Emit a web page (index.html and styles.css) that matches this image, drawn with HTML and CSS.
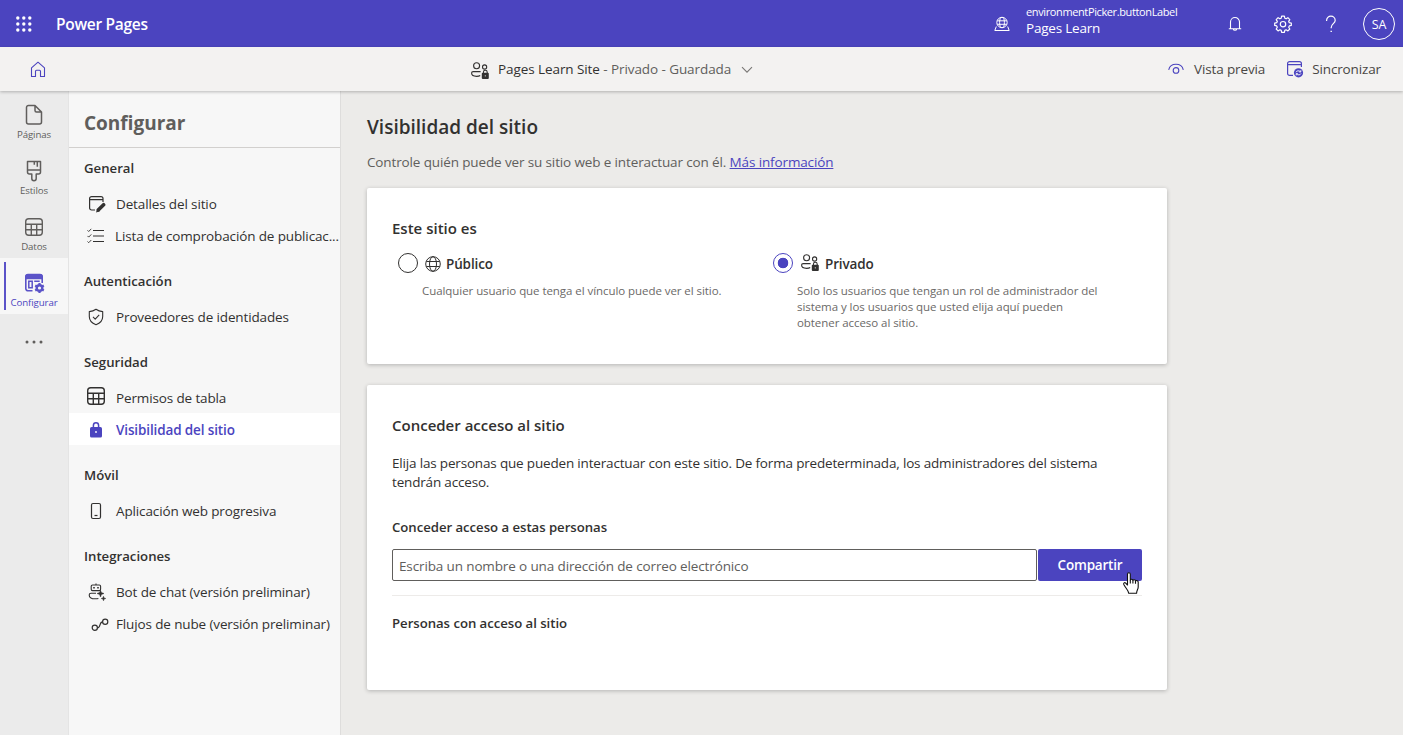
FILE: index.html
```
<!DOCTYPE html>
<html lang="es">
<head>
<meta charset="utf-8">
<title>Power Pages</title>
<link rel="stylesheet" href="styles.css">
</head>
<body>
<svg class="sprite" width="0" height="0" aria-hidden="true">
  <symbol id="people-lock" viewBox="0 0 20 20">
    <g fill="none" stroke="currentColor" stroke-width="1.1">
      <circle cx="6.600" cy="4.800" r="3"/>
      <circle cx="14.600" cy="6" r="2.100"/>
      <path d="M10.600 10.600H3.200c-1 0-1.600.7-1.600 1.500 0 2 2 3.300 5 3.300 1.500 0 2.800-.3 3.600-.9"/>
      <path d="M13.400 12.500v-1.300a1.900 1.900 0 0 1 3.800 0v1.300"/>
    </g>
    <rect x="11.800" y="11.800" width="7" height="6.200" rx="1" fill="currentColor"/>
    <circle cx="15.300" cy="14.800" r=".6" fill="#f3f2f1"/>
  </symbol>
  <symbol id="table" viewBox="0 0 20 20">
    <g fill="none" stroke="currentColor" stroke-width="1.400">
      <rect x="1.700" y="1.700" width="16.600" height="16.600" rx="3"/>
      <path d="M1.700 7.300h16.600M1.700 12.700h16.600M7.300 7.300v11M12.700 7.300v11"/>
    </g>
  </symbol>
</svg>

<header class="topbar">
  <svg class="waffle" width="16" height="16" viewBox="0 0 16 16" fill="#fff">
    <circle cx="1.800" cy="2" r="1.700"/><circle cx="7.800" cy="2" r="1.700"/><circle cx="13.800" cy="2" r="1.700"/>
    <circle cx="1.800" cy="8" r="1.700"/><circle cx="7.800" cy="8" r="1.700"/><circle cx="13.800" cy="8" r="1.700"/>
    <circle cx="1.800" cy="14" r="1.700"/><circle cx="7.800" cy="14" r="1.700"/><circle cx="13.800" cy="14" r="1.700"/>
  </svg>
  <span class="brand">Power Pages</span>
  <div class="environment">
    <svg width="16" height="16" viewBox="0 0 16 16" fill="none" stroke="#fff" stroke-width="1">
      <circle cx="8" cy="6.500" r="5.200"/><ellipse cx="8" cy="6.500" rx="2.400" ry="5.200"/>
      <path d="M3.200 4.800h9.600M3.200 8.300h9.600M2.300 10.500 .8 14.500h14.400l-1.500-4"/>
    </svg>
    <div class="environment-text">
      <span class="environment-label">environmentPicker.buttonLabel</span>
      <span class="environment-name">Pages Learn</span>
    </div>
  </div>
  <svg class="top-icon bell" width="16" height="16" viewBox="0 0 16 16" fill="none" stroke="#fff" stroke-width="1.100">
    <path d="M3.500 12.500V6a4.500 4.500 0 0 1 9 0v6.500M1.800 12.700h12.400M6.200 12.900a1.850 1.850 0 0 0 3.600 0"/>
  </svg>
  <svg class="top-icon gear" width="18" height="18" viewBox="0 0 18 18" fill="none" stroke="#fff" stroke-width="1.200" stroke-linejoin="round">
    <path d="M7.600 1.200h2.800l.4 2 1.300.6 1.800-1.100 1.900 1.900-1.100 1.800.6 1.300 2 .4v2.300l-2 .5-.6 1.300 1.100 1.800-1.900 1.900-1.800-1.100-1.300.6-.4 1.900H7.600l-.4-1.900-1.300-.6-1.800 1.100-1.900-1.900 1.100-1.800-.6-1.300-2-.5V8.100l2-.4.6-1.300-1.100-1.800 1.900-1.900 1.800 1.100 1.300-.6z"/>
    <circle cx="9" cy="9.200" r="2.700"/>
  </svg>
  <svg class="top-icon help" width="12" height="18" viewBox="0 0 12 18" fill="none" stroke="#fff" stroke-width="1.200">
    <path d="M1.600 6V5.400a4.300 4.300 0 0 1 8.600 0c0 3-4 3.600-4 7v.8"/><path d="M5.500 16.300h1.400"/>
  </svg>
  <span class="avatar">SA</span>
</header>

<div class="sitebar">
  <svg class="home" width="16" height="17" viewBox="0 0 16 17" fill="none" stroke="#4b44bf" stroke-width="1.100" stroke-linejoin="round">
    <path d="M1.500 6.800 8 1.200l6.500 5.600v8.700h-4V10.200a1 1 0 0 0-1-1h-3a1 1 0 0 0-1 1v5.300h-4z"/>
  </svg>
  <div class="site-title">
    <svg class="site-icon" width="20" height="20"><use href="#people-lock"/></svg>
    <span class="site-name">Pages Learn Site <span class="site-state">- Privado - Guardada</span></span>
    <svg class="chevron" width="12" height="8" viewBox="0 0 12 8" fill="none" stroke="#797775" stroke-width="1.100"><path d="m1 1.200 5 5 5-5"/></svg>
  </div>
  <div class="site-actions">
    <svg width="16" height="12" viewBox="0 0 16 12" fill="none" stroke="#4b44bf" stroke-width="1.100">
      <path d="M.7 6.800C1.500 3.500 4.500 1.300 8 1.300s6.500 2.200 7.300 5.500"/><circle cx="8" cy="7.400" r="2.800"/>
    </svg>
    <span class="action preview">Vista previa</span>
    <svg width="18" height="18" viewBox="0 0 18 18" fill="none" stroke="#4b44bf" stroke-width="1.200">
      <path d="M7 15.400H3.600a2 2 0 0 1-2-2V3.600a2 2 0 0 1 2-2h9.800a2 2 0 0 1 2 2V7M1.600 4.600h13.800"/>
      <circle cx="12.500" cy="12.800" r="4.600" fill="#4b44bf" stroke="none"/>
      <path stroke="#fff" stroke-width=".9" d="M10 12.200c.5-1.500 3-2 4.600-.4M14.800 10.200v1.700h-1.700M15 13.500c-.6 1.500-3 2-4.600.4M10.200 15.400v-1.700h1.700"/>
    </svg>
    <span class="action sync">Sincronizar</span>
  </div>
</div>

<div class="workspace">
  <nav class="rail">
    <a class="rail-item">
      <svg width="20" height="22" viewBox="0 0 20 22" fill="none" stroke="#605e5c" stroke-width="1.500" stroke-linejoin="round">
        <path d="M4.500 1.500H11l6.500 6.500v10a2 2 0 0 1-2 2h-11a2 2 0 0 1-2-2V3.500a2 2 0 0 1 2-2zM11 1.500V6.500a1.500 1.500 0 0 0 1.500 1.500h5"/>
      </svg>
      <span>Páginas</span>
    </a>
    <a class="rail-item">
      <svg width="20" height="22" viewBox="0 0 20 22" fill="none" stroke="#605e5c" stroke-width="1.500" stroke-linejoin="round">
        <path d="M3.500 1.500h13v10.500a2 2 0 0 1-2 2h-2.300v4.500a2.200 2.200 0 0 1-4.400 0V14H5.500a2 2 0 0 1-2-2zM3.500 10h13M10.300 1.500v3.300M13.300 1.500v5.200"/>
      </svg>
      <span>Estilos</span>
    </a>
    <a class="rail-item muted">
      <svg width="20" height="22" viewBox="0 -1 20 22"><use href="#table" width="20" height="20"/></svg>
      <span>Datos</span>
    </a>
    <a class="rail-item selected">
      <svg width="22" height="22" viewBox="0 0 22 22" fill="none">
        <path d="M9.500 18.800H5a2.200 2.200 0 0 1-2.200-2.200V4.700A2.200 2.200 0 0 1 5 2.500h12a2.200 2.200 0 0 1 2.200 2.200V11" stroke="#5b53c8" stroke-width="1.600"/>
        <path d="M2.200 7.200V4.500C2.200 3 3.200 2 4.700 2h12.600c1.500 0 2.500 1 2.500 2.500v2.700z" fill="#5b53c8"/>
        <path d="M5.800 9.300h3.400v6.400H5.800zM11.200 9.200h5.500" stroke="#5b53c8" stroke-width="1.500"/>
        <circle cx="16.500" cy="16" r="2.800" stroke="#5b53c8" stroke-width="2.400"/>
        <path d="M16.500 11v2M16.500 19v2M12.200 13.500l1.700 1M19.100 17.500l1.700 1M12.200 18.500l1.700-1M19.100 14.500l1.700-1" stroke="#5b53c8" stroke-width="2.200"/>
      </svg>
      <span>Configurar</span>
    </a>
    <a class="rail-more"><svg width="18" height="4" viewBox="0 0 18 4" fill="#605e5c"><circle cx="2" cy="2" r="1.500"/><circle cx="9" cy="2" r="1.500"/><circle cx="16" cy="2" r="1.500"/></svg></a>
  </nav>

  <aside class="panel">
    <h2 class="panel-title">Configurar</h2>
    <section class="group">
      <h3>General</h3>
      <a class="item">
        <svg width="20" height="20" viewBox="0 0 20 20" fill="none" stroke="#323130" stroke-width="1.200">
          <path d="M9 16H5.600a2 2 0 0 1-2-2V4.600a2 2 0 0 1 2-2h9.400a2 2 0 0 1 2 2v3.400M3.600 5.700H17"/>
          <path d="M17.600 10.700 12.500 15.800" stroke-width="3.600" stroke-linecap="round"/>
          <path d="m11 14.400 2.900 2.900-3.800 1.100z" fill="#323130" stroke="none"/>
        </svg>
        <span>Detalles del sitio</span>
      </a>
      <a class="item shifted">
        <svg width="18" height="16" viewBox="0 0 18 16" fill="none" stroke="#323130" stroke-width="1.100">
          <path d="M6 2.500h11M6 8h11M6 13.500h11"/><path d="m.5 2.300 1.200 1.200L4.300.8M.5 7.900l1.200 1.200 2.600-2.700M.5 13.500l1.200 1.200L4.300 12" stroke-width=".9"/>
        </svg>
        <span>Lista de comprobación de publicac...</span>
      </a>
    </section>
    <section class="group">
      <h3>Autenticación</h3>
      <a class="item">
        <svg width="20" height="20" viewBox="0 0 20 20" fill="none" stroke="#323130" stroke-width="1.100" stroke-linejoin="round">
          <path d="M10 2.300c2 1.500 4.200 2.200 6.700 2.300v5c0 4-2.500 6.700-6.700 8.200-4.200-1.500-6.700-4.200-6.700-8.200v-5c2.500-.1 4.700-.8 6.700-2.300z"/><path d="m7 9.900 2.200 2.200 4-4.200"/>
        </svg>
        <span>Proveedores de identidades</span>
      </a>
    </section>
    <section class="group">
      <h3>Seguridad</h3>
      <a class="item raised"><svg width="20" height="20"><use href="#table"/></svg><span>Permisos de tabla</span></a>
      <a class="item current">
        <svg width="20" height="20" viewBox="0 0 20 20">
          <rect x="4" y="7" width="12" height="10.500" rx="1.600" fill="#4b44bf"/>
          <path d="M7.400 7.500V5.400a2.600 2.600 0 0 1 5.200 0v2.100" fill="none" stroke="#4b44bf" stroke-width="1.500"/>
          <circle cx="10" cy="12" r=".9" fill="#fff"/>
        </svg>
        <span>Visibilidad del sitio</span>
      </a>
    </section>
    <section class="group">
      <h3>Móvil</h3>
      <a class="item">
        <svg width="20" height="20" viewBox="0 0 20 20" fill="none" stroke="#323130" stroke-width="1.200"><rect x="5.500" y="2.500" width="9" height="15" rx="1.500"/><path d="M8.500 14.500h3"/></svg>
        <span>Aplicación web progresiva</span>
      </a>
    </section>
    <section class="group">
      <h3>Integraciones</h3>
      <a class="item">
        <svg width="20" height="20" viewBox="0 0 20 20" fill="none" stroke="#323130" stroke-width="1.100">
          <path d="M10 1.500v1.500"/><rect x="5.200" y="3" width="9.400" height="5.600" rx="1.300"/>
          <path d="M10 11.200H5c-1.100 0-1.800.7-1.800 1.700 0 2.500 2.500 3.900 6 3.900 1.200 0 2.300-.1 3.200-.4"/>
          <path d="M7.200 5.800h1.600M11.200 5.800h1.600" stroke-width="1.500"/>
          <path d="m14.500 8.300.9 2.300 2.600.9-2.600.9-.9 2.600-.9-2.600-2.600-.9 2.600-.9zM17.500 14.300l.6 1.600 1.700.6-1.700.6-.6 1.700-.6-1.700-1.700-.6 1.700-.6z" fill="#323130" stroke-width=".5"/>
        </svg>
        <span>Bot de chat (versión preliminar)</span>
      </a>
      <a class="item flow">
        <svg width="20" height="20" viewBox="0 0 20 20" fill="none" stroke="#323130" stroke-width="1.200"><circle cx="4.800" cy="13.700" r="2.600"/><circle cx="15.200" cy="7.800" r="2.600"/><path d="M7.400 13.800c3.600 0 1.600-6 5.200-6"/></svg>
        <span>Flujos de nube (versión preliminar)</span>
      </a>
    </section>
  </aside>

  <main class="content">
    <h1>Visibilidad del sitio</h1>
    <p class="intro">Controle quién puede ver su sitio web e interactuar con él. <a>Más información</a></p>

    <section class="card visibility">
      <h2>Este sitio es</h2>
      <div class="options">
        <div class="option">
          <div class="option-head">
            <span class="radio"></span>
            <svg class="globe" width="16" height="16" viewBox="0 0 16 16" fill="none" stroke="#323130" stroke-width="1"><circle cx="8" cy="8" r="7.300"/><ellipse cx="8" cy="8" rx="3.500" ry="7.300"/><path d="M1.300 5.500h13.400M1.300 10.500h13.400"/></svg>
            <span class="option-label">Público</span>
          </div>
          <p>Cualquier usuario que tenga el vínculo puede ver el sitio.</p>
        </div>
        <div class="option">
          <div class="option-head">
            <span class="radio checked"></span>
            <svg class="private" width="20" height="20"><use href="#people-lock"/></svg>
            <span class="option-label">Privado</span>
          </div>
          <p>Solo los usuarios que tengan un rol de administrador del<br>sistema y los usuarios que usted elija aquí pueden<br>obtener acceso al sitio.</p>
        </div>
      </div>
    </section>

    <section class="card access">
      <h2>Conceder acceso al sitio</h2>
      <p class="access-text">Elija las personas que pueden interactuar con este sitio. De forma predeterminada, los administradores del sistema<br>tendrán acceso.</p>
      <h3>Conceder acceso a estas personas</h3>
      <div class="share-row">
        <div class="people-input">Escriba un nombre o una dirección de correo electrónico</div>
        <div class="share-button">Compartir
          <svg class="pointer" width="18" height="23" viewBox="0 0 18 23" fill="#fff" stroke="#111" stroke-width="1.100" stroke-linejoin="round">
            <path d="M5.500 13V2.300c0-2 2.800-2 2.800 0V8c.3-1.200 2.500-1 2.600.4.500-1 2.500-.8 2.600.6.600-.8 2.700-.6 2.700 1.100v4.800c0 2.300-1.600 3.600-1.600 6.300H6.700c0-2.600-3.100-5-4.900-8.700-.6-1.500.8-2.500 1.900-1.400z"/><path d="M8.300 8v3.500M10.900 8.400v3.100M13.500 9v2.800" fill="none"/>
          </svg>
        </div>
      </div>
      <h3 class="members">Personas con acceso al sitio</h3>
    </section>
  </main>
</div>
</body>
</html>
```

FILE: styles.css
```
* { box-sizing: border-box; }
body {
  margin: 0;
  height: 735px;
  overflow: hidden;
  display: flex;
  flex-direction: column;
  background: #ecebe9;
  color: #323130;
  font: 13.5px/20px "Open Sans", "Noto Sans", sans-serif;
  letter-spacing: -.13px;
}
h1, h2, h3, p { margin: 0; }
h1, h2, h3 { letter-spacing: 0; }
svg { display: block; flex: none; }
.sprite { position: absolute; }

.topbar {
  flex: none;
  display: flex;
  align-items: center;
  height: 47px;
  padding-right: 8px;
  background: #4b44bf;
  color: #fff;
}
.waffle { margin-left: 16px; }
.brand { margin-left: 24px; font-size: 15.500px; font-weight: 600; letter-spacing: -.29px; }
.environment { display: flex; align-items: center; margin-left: auto; width: 233px; }
.environment-text { display: flex; flex-direction: column; margin: -8px 0 0 16px; }
.environment-label { font-size: 11px; line-height: 16px; letter-spacing: -.38px; }
.environment-name { font-size: 13.500px; line-height: 16px; letter-spacing: -.2px; }
.gear { margin-left: 31px; }
.help { margin-left: 33px; }
.avatar {
  width: 32px;
  height: 32px;
  margin-left: 26px;
  border: 1px solid #fff;
  border-radius: 50%;
  font-size: 12.500px;
  line-height: 32px;
  text-align: center;
}

.sitebar {
  position: relative;
  flex: none;
  display: grid;
  grid-template-columns: 470px 1fr auto;
  align-items: center;
  height: 44px;
  background: #f3f2f1;
  box-shadow: 0 1px 3px rgba(0, 0, 0, .25);
}
.home { margin-left: 30px; }
.site-title, .site-actions { display: flex; align-items: center; }
.site-icon { margin-top: 4px; }
.site-name { margin-left: 8px; letter-spacing: -.08px; }
.site-state { color: #605e5c; }
.chevron { margin: 2px 0 0 10px; }
.site-actions { padding-right: 22px; }
.preview { margin: 0 21px 0 10px; }
.sync { margin-left: 8px; }
.action { color: #484644; }

.workspace { flex: 1; display: flex; min-height: 0; }
.rail { width: 69px; background: #ebebeb; border-right: 1px solid #e4e4e4; }
.rail-item {
  display: flex;
  flex-direction: column;
  align-items: center;
  height: 56px;
  padding-top: 14px;
  color: #605e5c;
  font-size: 9.700px;
  line-height: 14px;
}
.rail-item span { padding-top: 2px; }
.rail-item:first-child { margin-top: -1px; }
.selected {
  position: relative;
  background: #f7f7f7;
  color: #4b44bf;
  letter-spacing: -.1px;
}
.selected::before {
  content: "";
  position: absolute;
  left: 4px;
  top: 4px;
  width: 2px;
  height: 48px;
  background: #5b53c8;
}
.rail-more { display: flex; justify-content: center; padding-top: 26px; }

.panel { width: 272px; background: #f7f7f7; border-right: 1px solid #dedddc; }
.panel-title {
  height: 57px;
  padding: 17px 0 0 15px;
  border-bottom: 1px solid #d2d0ce;
  color: #605e5c;
  font-size: 19px;
  font-weight: 700;
  line-height: 30px;
}
.group { margin-bottom: 9px; }
.group h3 { padding-left: 15px; font-size: 13.200px; font-weight: 600; line-height: 40px; }
.item { display: flex; align-items: center; height: 32px; padding-left: 17px; white-space: nowrap; }
.item span { margin-left: 10px; }
.shifted { padding-left: 18px; }
.raised svg { margin-top: -4px; }
.flow { padding-left: 21px; }
.flow span { margin-left: 6px; }
.current {
  margin: -1px 0 10px;
  padding-top: 1px;
  background: #fff;
  color: #4b44bf;
  font-weight: 600;
}

.content { flex: 1; padding: 21px 0 0 26px; }
.content h1 { font-size: 19px; font-weight: 600; line-height: 30px; }
.intro { margin-top: 10px; color: #605e5c; }
.intro a { color: #4b44bf; text-decoration: underline; }
.card {
  width: 800px;
  padding: 0 25px;
  border-radius: 2px;
  background: #fff;
  box-shadow: 0 1px 4px rgba(0, 0, 0, .24);
}
.card h2 { font-size: 15px; font-weight: 600; line-height: 24px; }
.card h3 { font-size: 13.200px; font-weight: 600; line-height: 20px; letter-spacing: -.04px; }
.visibility { height: 176px; margin-top: 16px; padding-top: 28px; }
.options { display: grid; grid-template-columns: 375px 375px; margin-top: 12px; }
.option-head { display: flex; align-items: center; height: 22px; padding-left: 6px; }
.option-label { margin: 2px 0 0 5px; font-weight: 600; }
.option p {
  margin-top: 9px;
  padding-left: 30px;
  color: #6b6967;
  font-size: 11.500px;
  line-height: 16px;
  letter-spacing: -.06px;
}
.radio { width: 20px; height: 20px; margin-top: -1px; border: 1px solid #323130; border-radius: 50%; }
.checked { border-color: #4b44bf; background: radial-gradient(circle, #4b44bf 5px, transparent 5.600px); }
.globe { margin: 2px 0 0 7px; }
.private { margin: 0 0 0 7px; }

.access { height: 305px; margin-top: 21px; padding-top: 28px; }
.access-text { margin-top: 17px; line-height: 19px; letter-spacing: -.175px; }
.access-text + h3 { margin-top: 25px; }
.share-row { display: flex; gap: 1px; margin-top: 12px; padding-bottom: 14px; border-bottom: 1px solid #edebe9; }
.people-input {
  flex: 1;
  height: 32px;
  padding-left: 6px;
  border: 1px solid #605e5c;
  border-radius: 2px;
  color: #605e5c;
  line-height: 32px;
}
.share-button {
  position: relative;
  width: 104px;
  height: 32px;
  border-radius: 2px;
  background: #4b44bf;
  color: #fff;
  font-weight: 600;
  line-height: 32px;
  letter-spacing: -.2px;
  text-align: center;
}
.pointer { position: absolute; left: 84px; top: 23px; }
.members { margin-top: 17px; }
```
